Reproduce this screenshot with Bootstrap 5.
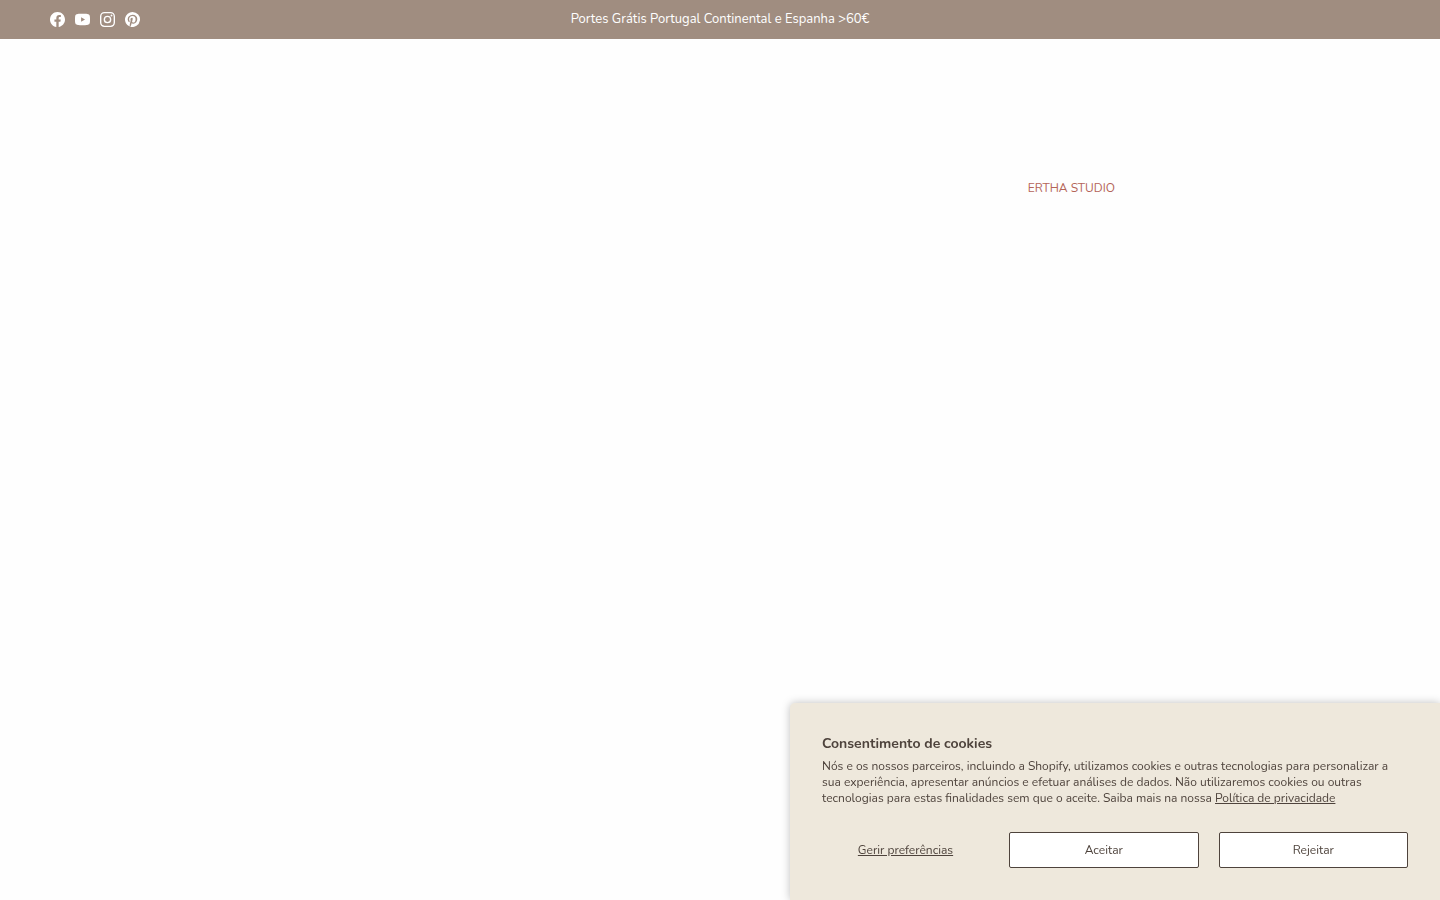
<!DOCTYPE html>
<html lang="pt">
<head>
<meta charset="utf-8">
<meta name="viewport" content="width=device-width, initial-scale=1">
<title>Ertha Studio</title>
<link href="https://cdn.jsdelivr.net/npm/bootstrap@5.3.0/dist/css/bootstrap.min.css" rel="stylesheet">
<style>
  body { font-family: Nunito, Lato, "Liberation Sans", sans-serif; background: #fefefe; color: #4e433c; }
  .announcement { background: #a08d80; color: #fff; font-size: 13px; line-height: 19px; padding: 10px 50px; }
  .social { gap: 10px; }
  .social svg { display: block; width: 15px; height: 15px; fill: #fff; }
  .main-nav { padding: 140px 325px 0 50px; }
  .main-nav .nav-link { color: #b46458; font-size: 12px; line-height: 18px; }
  .consent { width: 650px; max-width: 100%; padding: 32px; background: #eee8dc; border-radius: 5px 0 0 0; box-shadow: 0 0 8px rgba(0, 0, 0, .25); }
  .consent h2 { font-size: 14px; line-height: 18px; margin-bottom: 5px; }
  .consent p { font-size: 12px; line-height: 16px; margin-bottom: 26px; }
  .consent a { color: inherit; }
  .consent-actions { gap: 20px; }
  .consent .btn { font-size: 12px; line-height: 18px; padding: 8px 16px; color: #4e433c; border: 1px solid #4e433c; border-radius: 2px; background: #fff; }
  .consent .btn-preferences { width: 167px; background: none; border-color: transparent; text-decoration: underline; }
</style>
</head>
<body>
<header>
  <div class="announcement row g-0 align-items-center">
    <div class="col d-flex social">
      <a href="#" aria-label="Facebook"><svg viewBox="0 0 16 16"><path d="M16 8.049c0-4.446-3.582-8.05-8-8.05C3.58 0-.002 3.603-.002 8.05c0 4.017 2.926 7.347 6.75 7.951v-5.625h-2.03V8.05H6.75V6.275c0-2.017 1.195-3.131 3.022-3.131.876 0 1.791.157 1.791.157v1.98h-1.009c-.993 0-1.303.621-1.303 1.258v1.51h2.218l-.354 2.326H9.25V16c3.824-.604 6.75-3.934 6.75-7.951z"/></svg></a>
      <a href="#" aria-label="YouTube"><svg viewBox="0 0 16 16"><path fill-rule="evenodd" d="M3 2.2C5 1.9 11 1.9 13 2.2 15 2.4 15.7 3.200 15.900 5c.15 2 .15 4 0 6-.2 1.800-.9 2.600-2.900 2.800-2 .3-8 .3-10 0C1 13.600.3 12.800.1 11c-.15-2-.15-4 0-6C.3 3.200 1 2.400 3 2.200zM6.500 5.500v5L10.700 8z"/></svg></a>
      <a href="#" aria-label="Instagram"><svg viewBox="0 0 16 16"><path fill-rule="evenodd" d="M4.700 0h6.600A4.700 4.700 0 0 1 16 4.700v6.600a4.700 4.700 0 0 1-4.700 4.700H4.700A4.700 4.700 0 0 1 0 11.300V4.700A4.700 4.700 0 0 1 4.700 0zm0 1.450A3.250 3.250 0 0 0 1.450 4.700v6.600a3.250 3.250 0 0 0 3.250 3.250h6.600a3.250 3.250 0 0 0 3.250-3.250V4.700a3.250 3.250 0 0 0-3.250-3.250zM8 3.900a4.100 4.100 0 1 1 0 8.200 4.100 4.100 0 0 1 0-8.200zm0 1.450a2.650 2.650 0 1 0 0 5.300 2.650 2.650 0 0 0 0-5.300z"/><circle cx="12.270" cy="3.730" r="1"/></svg></a>
      <a href="#" aria-label="Pinterest"><svg viewBox="0 0 16 16"><path d="M8 0a8 8 0 0 0-2.915 15.452c-.07-.633-.134-1.606.027-2.297.146-.625.938-3.977.938-3.977s-.239-.479-.239-1.187c0-1.113.645-1.943 1.448-1.943.682 0 1.012.512 1.012 1.127 0 .686-.437 1.712-.663 2.663-.188.796.4 1.446 1.185 1.446 1.422 0 2.515-1.500 2.515-3.664 0-1.915-1.377-3.254-3.342-3.254-2.276 0-3.612 1.707-3.612 3.471 0 .688.265 1.425.595 1.826a.24.24 0 0 1 .056.230c-.061.252-.196.796-.222.907-.035.146-.116.177-.268.107-1-.465-1.624-1.926-1.624-3.100 0-2.523 1.834-4.840 5.286-4.840 2.775 0 4.932 1.977 4.932 4.620 0 2.757-1.739 4.976-4.151 4.976-.811 0-1.573-.421-1.834-.919l-.498 1.902c-.181.695-.669 1.566-.995 2.097A8 8 0 1 0 8 0z"/></svg></a>
    </div>
    <div class="col-auto text-center">Portes Grátis Portugal Continental e Espanha &gt;60€</div>
    <div class="col"></div>
  </div>
  <nav class="main-nav nav justify-content-end" aria-label="Principal">
    <a class="nav-link p-0" href="#">ERTHA STUDIO</a>
  </nav>
</header>

<section class="consent position-fixed bottom-0 end-0" role="dialog" aria-labelledby="consent-title">
  <h2 id="consent-title" class="fw-bold">Consentimento de cookies</h2>
  <p>Nós e os nossos parceiros, incluindo a Shopify, utilizamos cookies e outras tecnologias para personalizar a sua experiência, apresentar anúncios e efetuar análises de dados. Não utilizaremos cookies ou outras tecnologias para estas finalidades sem que o aceite. Saiba mais na nossa <a href="#">Política de privacidade</a></p>
  <div class="consent-actions d-flex">
    <button type="button" class="btn btn-preferences">Gerir preferências</button>
    <button type="button" class="btn flex-fill w-25">Aceitar</button>
    <button type="button" class="btn flex-fill w-25">Rejeitar</button>
  </div>
</section>
<script src="https://cdn.jsdelivr.net/npm/bootstrap@5.3.0/dist/js/bootstrap.bundle.min.js"></script>
</body>
</html>
